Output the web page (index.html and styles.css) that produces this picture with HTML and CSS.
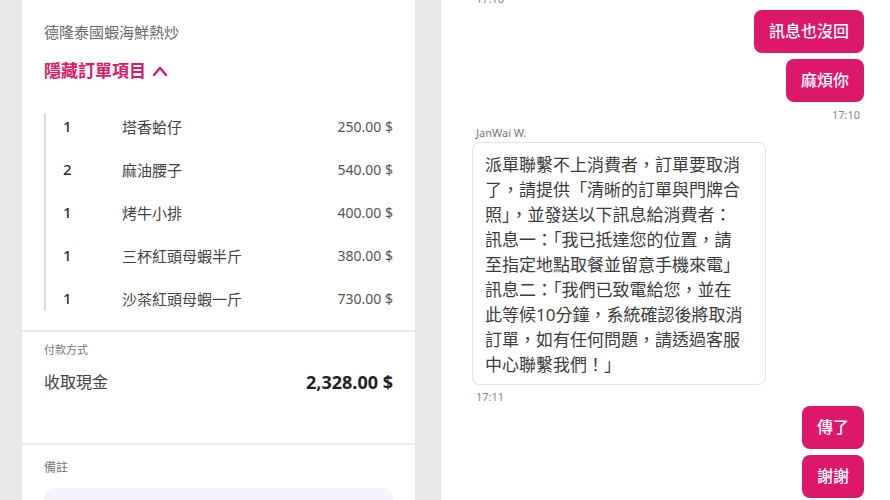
FILE: index.html
```html
<!DOCTYPE html>
<html lang="zh-Hant">
<head>
    <meta charset="UTF-8">
    <meta name="viewport" content="width=device-width, initial-scale=1.0">
    <title>訂單與客服對話</title>
    <link rel="stylesheet" href="styles.css">
</head>
<body>
    <div class="order">
        <div class="order-top">
            <div class="shop">德隆泰國蝦海鮮熱炒</div>
            <div class="toggle">隱藏訂單項目
                <svg width="16" height="12" viewBox="0 0 16 12"><polyline points="2,10 8,3 14,10" fill="none" stroke="#d81b6a" stroke-width="2.4" stroke-linecap="round" stroke-linejoin="round"/></svg>
            </div>
            <ul class="items">
                <li><span class="qty">1</span><span class="name">塔香蛤仔</span><span class="price">250.00 $</span></li>
                <li><span class="qty">2</span><span class="name">麻油腰子</span><span class="price">540.00 $</span></li>
                <li><span class="qty">1</span><span class="name">烤牛小排</span><span class="price">400.00 $</span></li>
                <li><span class="qty">1</span><span class="name">三杯紅頭母蝦半斤</span><span class="price">380.00 $</span></li>
                <li><span class="qty">1</span><span class="name">沙茶紅頭母蝦一斤</span><span class="price">730.00 $</span></li>
            </ul>
        </div>

        <div class="payment">
            <div class="label">付款方式</div>
            <div class="pay-row">
                <span>收取現金</span>
                <span class="total">2,328.00 $</span>
            </div>
        </div>

        <div class="note">
            <div class="label">備註</div>
            <div class="note-box"></div>
        </div>
    </div>

    <div class="chat">
        <div class="time first">17:10</div>
        <div class="bubble out">訊息也沒回</div>
        <div class="bubble out">麻煩你</div>
        <div class="time right">17:10</div>

        <div class="sender">JanWai W.</div>
        <div class="bubble in"><p>派單聯繫不上消費者，訂單要取消了，請提供「清晰的訂單與門牌合照」，並發送以下訊息給消費者：</p><p>訊息一：「我已抵達您的位置，請至指定地點取餐並留意手機來電」</p><p>訊息二：「我們已致電給您，並在此等候10分鐘，系統確認後將取消訂單，如有任何問題，請透過客服中心聯繫我們！」</p></div>
        <div class="time">17:11</div>

        <div class="bubble out">傳了</div>
        <div class="bubble out">謝謝</div>
    </div>
</body>
</html>
```

FILE: styles.css
```css
:root {
    --pink: #dd1769;
    --grey-bg: #e9e9e9;
    --line: #ececec;
    --text: #3a3a3a;
    --muted: #6a6a6a;
}

body {
    margin: 0;
    height: 500px;
    overflow: hidden;
    background-color: var(--grey-bg);
    font-family: "Noto Sans", "Noto Sans CJK TC", sans-serif;
    color: var(--text);
    display: flex;
    gap: 25px;
    padding-left: 22px;
}

/* 左邊訂單卡片 */
.order {
    width: 393px;
    flex-shrink: 0;
    background-color: #fff;
}

.order-top {
    padding: 21px 22px 19px;
    border-bottom: 2px solid var(--line);
}

.shop {
    font-size: 15px;
    line-height: 22px;
    color: var(--muted);
}

.toggle {
    margin-top: 16px;
    font-size: 17px;
    line-height: 24px;
    font-weight: 700;
    color: #d81b6a;
    display: flex;
    align-items: center;
    gap: 6px;
}

.items {
    list-style: none;
    margin: 30px 0 0;
    padding: 0 0 0 17px;
    border-left: 2px solid #dcdcdc;
    display: flex;
    flex-direction: column;
    gap: 17px;
}

.items li {
    display: flex;
    align-items: center;
    height: 26px;
    font-size: 15px;
}

.qty {
    width: 59px;
    font-weight: 500;
    color: #2e2e2e;
}

.name {
    flex: 1;
    color: #444;
}

.price {
    font-size: 14px;
    color: #555;
}

.payment {
    padding: 10px 22px 0;
    height: 101px;
    border-bottom: 2px solid var(--line);
}

.label {
    font-size: 11px;
    line-height: 16px;
    color: #777;
}

.pay-row {
    margin-top: 12px;
    display: flex;
    justify-content: space-between;
    align-items: center;
    font-size: 16px;
    line-height: 24px;
    color: #444;
}

.total {
    font-size: 18px;
    font-weight: 700;
    color: #222;
}

.note {
    padding: 15px 22px 0;
}

.note .label {
    font-size: 12px;
}

.note-box {
    margin-top: 12px;
    height: 12px;
    border-radius: 10px 10px 0 0;
    background-color: #f6f4fb;
}

/* 右邊對話 */
.chat {
    flex: 1;
    background-color: #fff;
    border-left: 1px solid #e2e2e2;
    padding: 0 26px 0 31px;
    display: flex;
    flex-direction: column;
    align-items: flex-start;
}

.time {
    font-size: 11px;
    line-height: 12px;
    color: #888;
    margin-top: 6px;
    margin-left: 4px;
}

.time.first {
    margin-top: -7px;
}

.time.right {
    align-self: flex-end;
    margin: 6px 4px 0 0;
    line-height: 14px;
}

.bubble {
    border-radius: 8px;
    font-size: 16px;
    line-height: 23px;
    flex-shrink: 0;
}

.bubble.out {
    align-self: flex-end;
    background-color: var(--pink);
    color: #fff;
    font-weight: 500;
    padding: 10px 15px;
    margin-top: 6px;
}

.time.first + .bubble.out {
    margin-top: 5px;
}

.sender {
    margin-top: 4px;
    margin-left: 4px;
    font-size: 11px;
    line-height: 14px;
    color: #777;
}

.bubble.in {
    margin-top: 2px;
    border: 1px solid #e3e3e3;
    padding: 9px 20px 7px 12px;
    color: #3c3c3c;
}

.bubble.in p {
    margin: 0;
    width: 15.3em;
    font-size: 17px;
    line-height: 25px;
}

.bubble.in + .time {
    margin-bottom: -3px;
}
```
